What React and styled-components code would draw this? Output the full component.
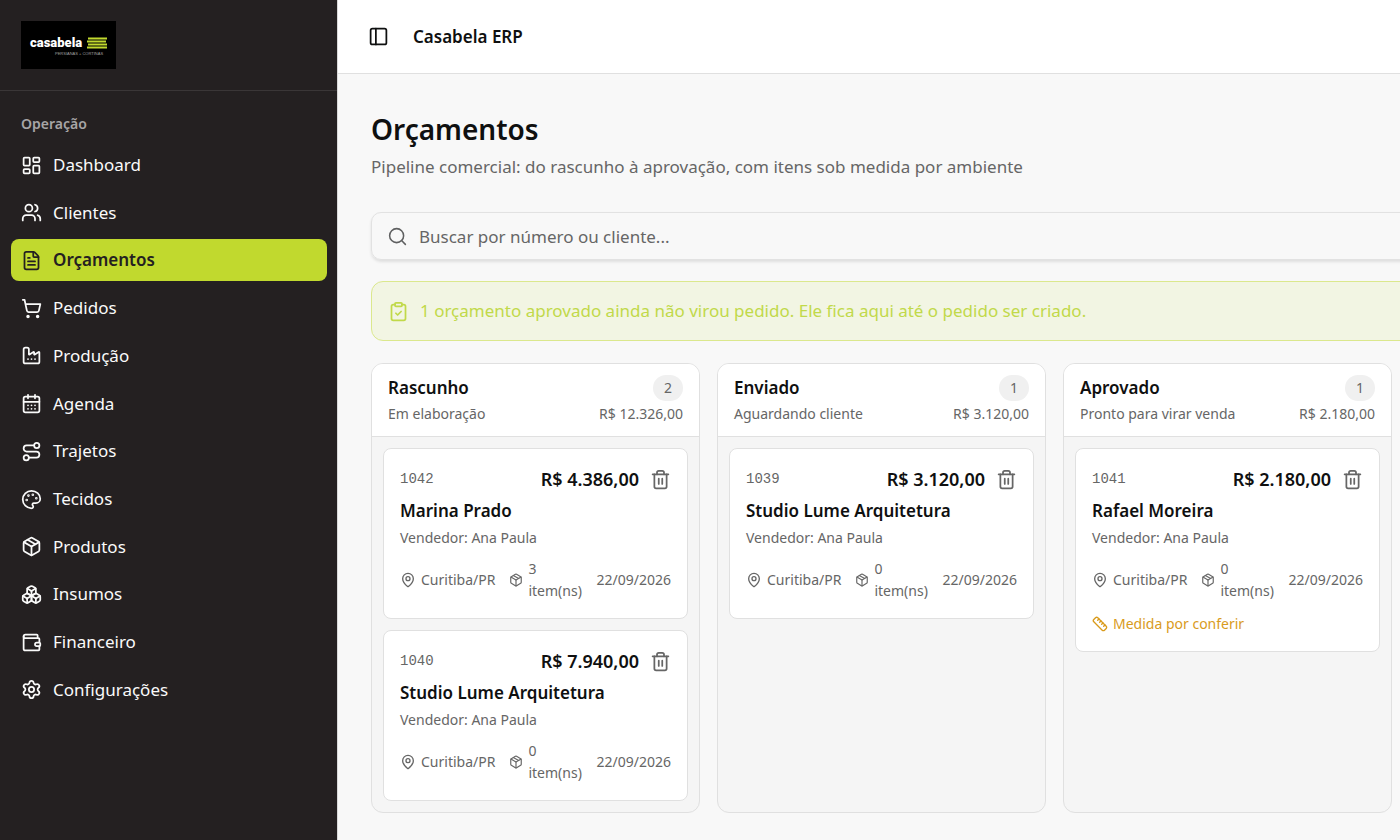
import { useState } from "react";
import styled, { createGlobalStyle, css } from "styled-components";
import {
  LayoutDashboard, Users, FileText, ShoppingCart, Factory, CalendarDays, Route, Palette,
  Package, Boxes, Wallet, Settings, PanelLeft, Search, ClipboardCheck, Trash2, MapPin, Ruler
} from "lucide-react";

const GlobalStyle = createGlobalStyle`
  * { box-sizing: border-box; }
  body {
    margin: 0;
    background: #f8f8f8;
    color: #0f1010;
    font-family: "Noto Sans", "Open Sans", sans-serif;
    font-size: 17px;
    line-height: 24px;
  }
  h1, h2, h3, p, ul { margin: 0; padding: 0; }
  ul { list-style: none; }
  button, input { font: inherit; }
`

const menu = [
  { title: "Dashboard", icon: LayoutDashboard },
  { title: "Clientes", icon: Users },
  { title: "Orçamentos", icon: FileText, active: true },
  { title: "Pedidos", icon: ShoppingCart },
  { title: "Produção", icon: Factory },
  { title: "Agenda", icon: CalendarDays },
  { title: "Trajetos", icon: Route },
  { title: "Tecidos", icon: Palette },
  { title: "Produtos", icon: Package },
  { title: "Insumos", icon: Boxes },
  { title: "Financeiro", icon: Wallet },
  { title: "Configurações", icon: Settings },
]

const columns = [
  {
    title: "Rascunho", hint: "Em elaboração", total: "R$ 12.326,00",
    cards: [
      { id: "1042", value: "R$ 4.386,00", client: "Marina Prado", items: 3 },
      { id: "1040", value: "R$ 7.940,00", client: "Studio Lume Arquitetura", items: 0 },
    ]
  },
  {
    title: "Enviado", hint: "Aguardando cliente", total: "R$ 3.120,00",
    cards: [
      { id: "1039", value: "R$ 3.120,00", client: "Studio Lume Arquitetura", items: 0 },
    ]
  },
  {
    title: "Aprovado", hint: "Pronto para virar venda", total: "R$ 2.180,00",
    cards: [
      { id: "1041", value: "R$ 2.180,00", client: "Rafael Moreira", items: 0, measure: true },
    ]
  },
]

const Layout = styled.div`
  display: flex;
  min-height: 100vh;
`

const Sidebar = styled.aside`
  flex: 0 0 338px;
  background: #242021;
  border-right: 1px solid #d8d8d8;
  color: #fafafa;
`

const Brand = styled.div`
  padding: 21px;
  border-bottom: 1px solid #3a3637;
`

const Logo = styled.div`
  display: flex;
  flex-direction: column;
  justify-content: center;
  width: 95px;
  height: 48px;
  padding: 0 9px;
  background: #000;
`

const LogoRow = styled.div`
  display: flex;
  align-items: center;
  justify-content: space-between;
`

const LogoMark = styled.svg`
  flex: 0 0 20px;
  height: 12px;
`

const LogoName = styled.span`
  font: 900 13px/16px Roboto, "Liberation Sans", sans-serif;
  color: #fff;
`

const LogoTag = styled.span`
  padding-left: 25px;
  font: 400 4px/5px "Liberation Sans", sans-serif;
  color: #a0a0a0;
  white-space: nowrap;
`

const Nav = styled.nav`
  padding: 20px 10px 20px 11px;
`

const NavLabel = styled.h2`
  padding: 0 10px;
  font-size: 14px;
  line-height: 26px;
  font-weight: 600;
  color: #a7a5a6;
`

const NavList = styled.ul`
  display: flex;
  flex-direction: column;
  justify-content: space-between;
  min-height: 574px;
  padding-top: 7px;
`

const NavLink = styled.a`
  display: flex;
  align-items: center;
  gap: 11px;
  height: 42px;
  padding: 0 10px;
  border-radius: 8px;
  color: inherit;
  text-decoration: none;
  ${props => props.$active && css`
    background: #c1d92e;
    color: #242021;
    font-weight: 600;
  `}
`

const Main = styled.div`
  flex: 1;
  min-width: 0;
  overflow: hidden;
`

const Topbar = styled.header`
  display: flex;
  align-items: center;
  gap: 24px;
  height: 74px;
  padding: 0 30px;
  background: #fff;
  border-bottom: 1px solid #e0e0e0;
  font-weight: 600;
`

const IconButton = styled.button`
  display: flex;
  padding: 0;
  border: 0;
  background: none;
  color: ${props => props.color || "inherit"};
  cursor: pointer;
`

const Content = styled.main`
  min-width: 1400px;
  padding: 35px 33px;
`

const Title = styled.h1`
  font-size: 28px;
  line-height: 40px;
  font-weight: 600;
`

const Subtitle = styled.p`
  padding-top: 6px;
  color: #666;
`

const SearchBox = styled.label`
  display: flex;
  align-items: center;
  gap: 11px;
  height: 48px;
  margin-top: 33px;
  padding: 0 15px;
  border: 1px solid #e2e2e2;
  border-radius: 10px;
  box-shadow: 0 2px 3px rgba(0, 0, 0, 0.1);
  color: #5f6061;
`

const SearchInput = styled.input`
  flex: 1;
  border: 0;
  padding: 2px 0 0;
  outline: 0;
  background: none;
  color: #0f1010;
  &::placeholder { color: #666; opacity: 1; }
`

const Notice = styled.div`
  display: flex;
  align-items: center;
  gap: 11px;
  height: 60px;
  margin-top: 21px;
  padding: 0 16px;
  border: 1px solid #dbe88d;
  border-radius: 12px;
  background: #f2f5e3;
  color: #c1d94a;
`

const Board = styled.div`
  display: grid;
  grid-auto-flow: column;
  grid-auto-columns: 329px;
  gap: 17px;
  margin-top: 22px;
`

const Column = styled.section`
  border: 1px solid #e0e0e0;
  border-radius: 12px;
  background: #f5f5f5;
  overflow: hidden;
`

const ColumnHead = styled.header`
  padding: 11px 16px 10px;
  background: #fff;
  border-bottom: 1px solid #e0e0e0;
`

const Line = styled.div`
  display: flex;
  align-items: center;
  justify-content: space-between;
`

const ColumnTitle = styled.h2`
  font-size: 17px;
  line-height: 26px;
  font-weight: 600;
`

const Count = styled.span`
  min-width: 30px;
  border-radius: 13px;
  background: #f0f0f0;
  color: #666;
  font-size: 14px;
  line-height: 26px;
  text-align: center;
`

const Muted = styled.p`
  color: #666;
  font-size: 14px;
  line-height: 25px;
`

const CardList = styled.div`
  display: flex;
  flex-direction: column;
  gap: 11px;
  padding: 11px;
`

const Card = styled.article`
  padding: 16px;
  border: 1px solid #e0e0e0;
  border-radius: 8px;
  background: #fff;
`

const Code = styled.span`
  flex: 1;
  color: #666;
  font: 14px/28px "Liberation Mono", monospace;
`

const Price = styled.span`
  margin-right: 11px;
  font-size: 18px;
  font-weight: 600;
`

const Client = styled.h3`
  padding-top: 4px;
  font-size: 17px;
  line-height: 28px;
  font-weight: 600;
`

const Meta = styled.div`
  display: flex;
  align-items: center;
  gap: 14px;
  margin-top: 8px;
  color: #666;
  font-size: 14px;
  line-height: 22px;
`

const MetaItem = styled.span`
  display: flex;
  align-items: center;
  gap: 5px;
`

const ItemCount = styled.span`
  width: min-content;
`

const MetaDate = styled.time`
  margin-left: auto;
`

const Warning = styled.p`
  display: flex;
  align-items: center;
  gap: 5px;
  padding-top: 11px;
  color: #d99b1c;
  font-size: 14px;
  line-height: 22px;
`

const BudgetCard = ({ card }) => (
  <Card>
    <Line>
      <Code>{card.id}</Code>
      <Price>{card.value}</Price>
      <IconButton type="button" color="#666" aria-label={`Excluir ${card.id}`}>
        <Trash2 size={21} />
      </IconButton>
    </Line>
    <Client>{card.client}</Client>
    <Muted>Vendedor: Ana Paula</Muted>
    <Meta>
      <MetaItem><MapPin size={16} />Curitiba/PR</MetaItem>
      <MetaItem><Package size={14} /><ItemCount>{card.items} item(ns)</ItemCount></MetaItem>
      <MetaDate>22/09/2026</MetaDate>
    </Meta>
    {card.measure && <Warning><Ruler size={16} />Medida por conferir</Warning>}
  </Card>
)

const App = () => {
  const [search, setSearch] = useState("");
  return (
    <Layout>
      <GlobalStyle />
      <Sidebar>
        <Brand>
          <Logo>
            <LogoRow>
              <LogoName>casabela</LogoName>
              <LogoMark viewBox="0 0 20 12" stroke="#c1d92e" strokeWidth="2">
                <path d="M1 1.5H20M0 4.5H19M1 7.5H20M0 10.5H20" />
              </LogoMark>
            </LogoRow>
            <LogoTag>PERSIANAS + CORTINAS</LogoTag>
          </Logo>
        </Brand>
        <Nav>
          <NavLabel>Operação</NavLabel>
          <NavList>
            {menu.map(({ title, icon: Icon, active }) => (
              <li key={title}>
                <NavLink href="#" $active={active}><Icon size={21} />{title}</NavLink>
              </li>
            ))}
          </NavList>
        </Nav>
      </Sidebar>
      <Main>
        <Topbar>
          <IconButton type="button" aria-label="Menu"><PanelLeft size={21} /></IconButton>
          Casabela ERP
        </Topbar>
        <Content>
          <Title>Orçamentos</Title>
          <Subtitle>Pipeline comercial: do rascunho à aprovação, com itens sob medida por ambiente</Subtitle>
          <SearchBox>
            <Search size={21} strokeWidth={1.75} />
            <SearchInput
              value={search}
              onChange={e => setSearch(e.target.value)}
              placeholder="Buscar por número ou cliente..."
            />
          </SearchBox>
          <Notice>
            <ClipboardCheck size={21} />
            1 orçamento aprovado ainda não virou pedido. Ele fica aqui até o pedido ser criado.
          </Notice>
          <Board>
            {columns.map(column => (
              <Column key={column.title}>
                <ColumnHead>
                  <Line>
                    <ColumnTitle>{column.title}</ColumnTitle>
                    <Count>{column.cards.length}</Count>
                  </Line>
                  <Line>
                    <Muted>{column.hint}</Muted>
                    <Muted>{column.total}</Muted>
                  </Line>
                </ColumnHead>
                <CardList>
                  {column.cards.map(card => <BudgetCard key={card.id} card={card} />)}
                </CardList>
              </Column>
            ))}
          </Board>
        </Content>
      </Main>
    </Layout>
  )
}

export default App;
